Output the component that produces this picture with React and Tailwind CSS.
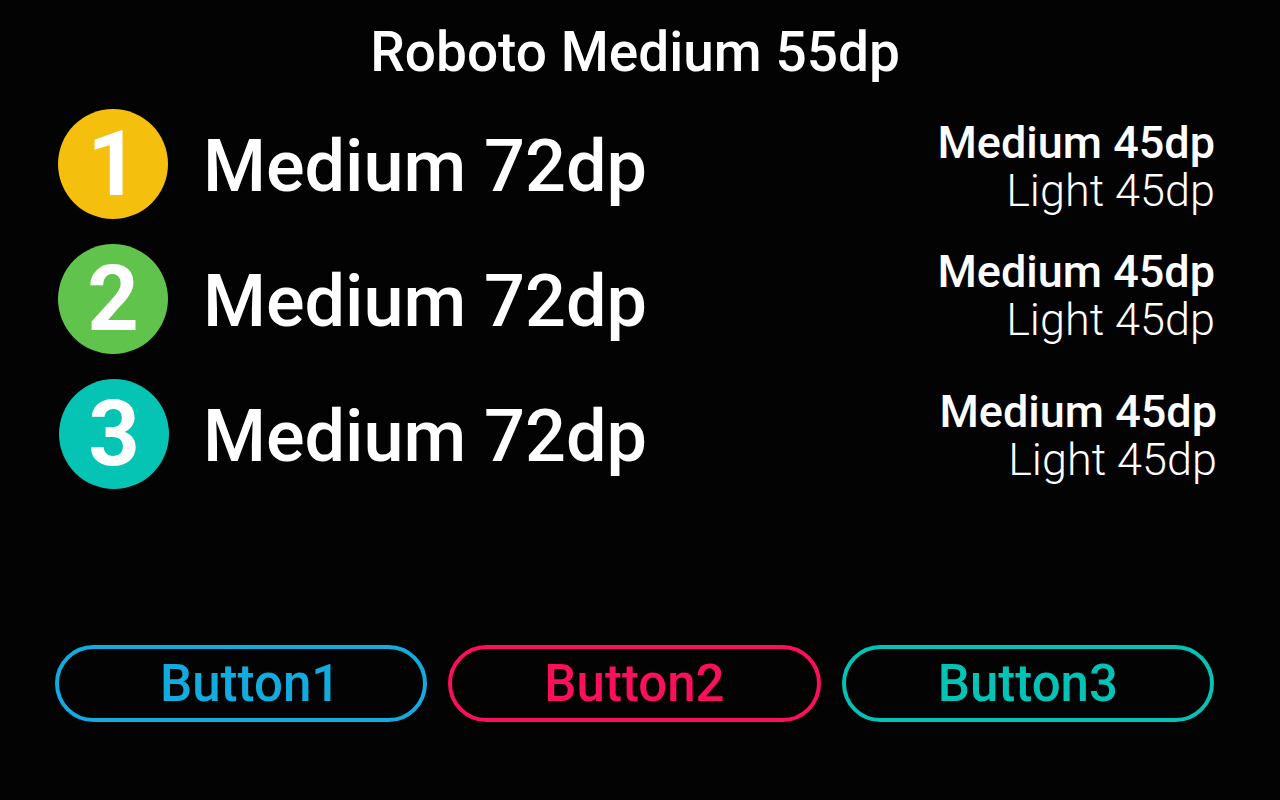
import React from "react";

// 번호 원 + 큰 텍스트 + 오른쪽 두 줄 텍스트
const rows = [
  { n: "1", color: "bg-[#f4bf0d]", circle: "", right: "" },
  { n: "2", color: "bg-[#60c34c]", circle: "", right: "-translate-y-[6px]" },
  { n: "3", color: "bg-[#05c4b4]", circle: "translate-x-[1px]", right: "translate-x-[2px] -translate-y-[1px]" },
];

const buttons = [
  { label: "Button1", cls: "border-[#12abe0] text-[#12abe0]", text: "translate-x-[9px]" },
  { label: "Button2", cls: "border-[#fc0f5b] text-[#fc0f5b]", text: "" },
  { label: "Button3", cls: "border-[#02c3b5] text-[#02c3b5]", text: "" },
];

const App = () => {
  return (
    <div
      className="w-[1280px] h-[800px] bg-[#030303] text-white flex flex-col overflow-hidden"
      style={{ fontFamily: "Roboto, 'Noto Sans', sans-serif" }}
    >
      {/* 제목 */}
      <h1 className="mt-[25px] text-center text-[55px] leading-[55px] font-medium pr-[10px]">
        Roboto Medium 55dp
      </h1>

      {/* 목록 */}
      <div className="mt-[29px] flex flex-col gap-[25px] pl-[58px] pr-[65px]">
        {rows.map((row) => (
          <div key={row.n} className="flex items-center h-[110px]">
            <div
              className={`w-[110px] h-[110px] rounded-full ${row.color} flex items-center justify-center ${row.circle}`}
            >
              <span className="text-[90px] leading-none font-bold mt-[2px]">{row.n}</span>
            </div>
            <span className="ml-[35px] text-[72px] leading-[72px] font-medium mt-[6px]">
              Medium 72dp
            </span>
            <div className={`ml-auto flex flex-col items-end mt-[5px] ${row.right}`}>
              <span className="text-[45px] leading-[48px] font-medium">Medium 45dp</span>
              <span className="text-[45px] leading-[48px] font-light">Light 45dp</span>
            </div>
          </div>
        ))}
      </div>

      {/* 버튼 */}
      <div className="mt-auto mb-[78px] grid grid-cols-3 gap-[21px] pl-[55px] pr-[66px]">
        {buttons.map((b) => (
          <button
            key={b.label}
            className={`h-[77px] rounded-full border-[4px] ${b.cls} text-[51px] leading-none font-medium flex items-center justify-center`}
          >
            <span className={b.text}>{b.label}</span>
          </button>
        ))}
      </div>
    </div>
  );
};

export default App;
